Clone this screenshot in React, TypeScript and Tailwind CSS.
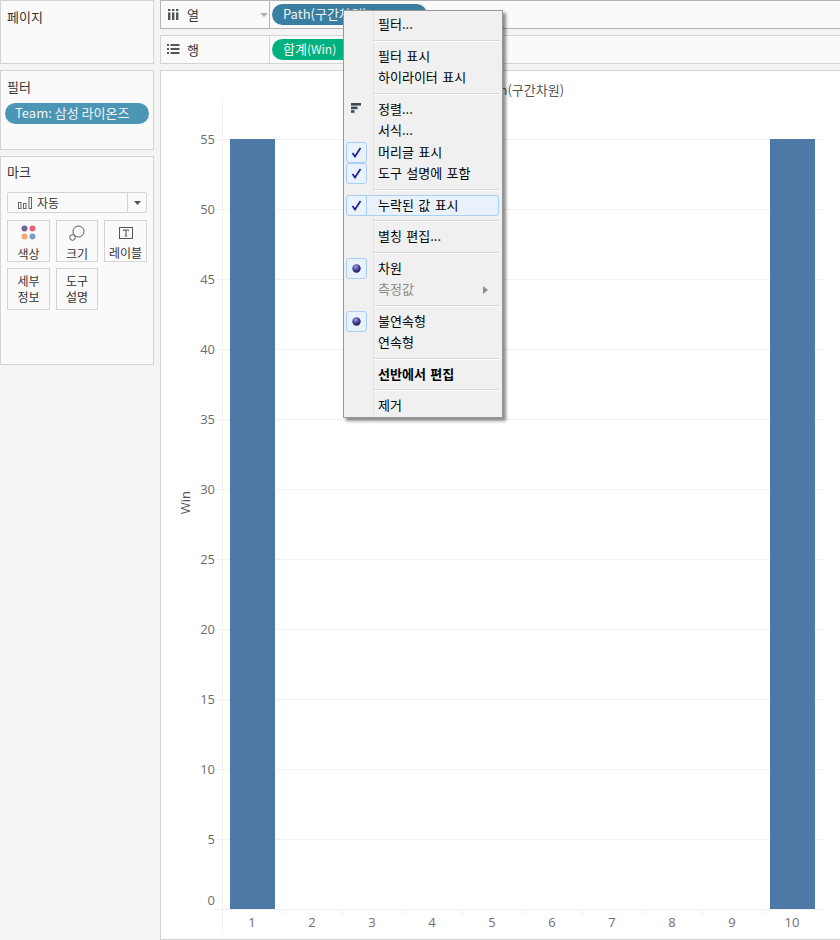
const kr = 'font-["Noto_Sans_CJK_KR","Liberation_Sans",sans-serif]';

const yTicks = [55, 50, 45, 40, 35, 30, 25, 20, 15, 10, 5];
const xTicks = [1, 2, 3, 4, 5, 6, 7, 8, 9, 10];

type Item = {
  label?: string;
  mark?: 'check' | 'radio' | 'sort';
  hl?: boolean;
  bold?: boolean;
  off?: boolean;
  sub?: boolean;
};

const menu: Item[] = [
  { label: '필터...' },
  {},
  { label: '필터 표시' },
  { label: '하이라이터 표시' },
  {},
  { label: '정렬...', mark: 'sort' },
  { label: '서식...' },
  { label: '머리글 표시', mark: 'check' },
  { label: '도구 설명에 포함', mark: 'check' },
  {},
  { label: '누락된 값 표시', mark: 'check', hl: true },
  {},
  { label: '별칭 편집...' },
  {},
  { label: '차원', mark: 'radio' },
  { label: '측정값', off: true, sub: true },
  {},
  { label: '불연속형', mark: 'radio' },
  { label: '연속형' },
  {},
  { label: '선반에서 편집', bold: true },
  {},
  { label: '제거' },
];

function ColumnsIcon() {
  return (
    <svg width="11" height="11" viewBox="0 0 11 11" fill="#555">
      <rect x="0" y="0" width="2.4" height="2" />
      <rect x="4" y="0" width="2.4" height="2" />
      <rect x="8" y="0" width="2.4" height="2" />
      <rect x="0" y="3.4" width="2.4" height="7.6" />
      <rect x="4" y="3.4" width="2.4" height="7.6" />
      <rect x="8" y="3.4" width="2.4" height="7.6" />
    </svg>
  );
}

function RowsIcon() {
  return (
    <svg width="13" height="11" viewBox="0 0 13 11" fill="#555">
      <rect x="0" y="0" width="2" height="2" />
      <rect x="3.5" y="0" width="9" height="2" />
      <rect x="0" y="4" width="2" height="2" />
      <rect x="3.5" y="4" width="9" height="2" />
      <rect x="0" y="8" width="2" height="2" />
      <rect x="3.5" y="8" width="9" height="2" />
    </svg>
  );
}

function MarkButton({ label, icon, narrow }: { label: string[]; icon?: React.ReactNode; narrow?: boolean }) {
  return (
    <div
      className={`${narrow ? 'w-[42px]' : 'w-[43px]'} h-[42px] border border-[#d4d4d4] bg-[#fafafa] flex flex-col items-center text-[12px] leading-[16px] text-[#333] ${
        icon ? 'pt-[4px]' : 'justify-center'
      }`}
    >
      {icon && <div className="h-[16px] mb-[5px] flex items-center justify-center">{icon}</div>}
      {label.map((l) => (
        <div key={l}>{l}</div>
      ))}
    </div>
  );
}

function MenuRow({ item }: { item: Item }) {
  if (!item.label) {
    return (
      <div className="h-[10px] flex flex-col justify-center pl-[30px] pr-[3px]">
        <div className="h-[1px] bg-[#d7d7d7]" />
        <div className="h-[1px] bg-white" />
      </div>
    );
  }
  const boxed = item.mark === 'check' || item.mark === 'radio';
  return (
    <div
      className={`relative flex items-center h-[21.5px] ml-[2px] mr-[3px] border rounded-[3px] ${
        item.hl ? 'border-[#a9d0f5] bg-[#e9f1fb]' : 'border-transparent'
      }`}
    >
      <div
        className={`shrink-0 -ml-[1px] w-[21px] h-[21px] flex items-center justify-center rounded-[3px] border ${
          boxed ? 'border-[#a9cdf3] bg-[#e9f1fb]' : 'border-transparent'
        }`}
      >
        {item.mark === 'check' && (
          <svg width="11" height="11" viewBox="0 0 11 11">
            <path d="M1.5 6 L4 9.5 L9.5 1" fill="none" stroke="#15208f" strokeWidth="1.7" />
          </svg>
        )}
        {item.mark === 'radio' && (
          <svg width="9" height="9" viewBox="0 0 9 9">
            <defs>
              <radialGradient id="ball" cx="40%" cy="30%" r="70%">
                <stop offset="0%" stopColor="#a0a0dc" />
                <stop offset="60%" stopColor="#3d3d8e" />
                <stop offset="100%" stopColor="#22225e" />
              </radialGradient>
            </defs>
            <circle cx="4.5" cy="4.5" r="4.2" fill="url(#ball)" />
          </svg>
        )}
        {item.mark === 'sort' && (
          <svg width="11" height="10" viewBox="0 0 11 10" fill="#3d4654" className="-mt-[2px]">
            <rect x="0" y="0" width="10" height="2.6" />
            <rect x="0" y="3.6" width="6.5" height="2.6" />
            <rect x="0" y="7.2" width="3.5" height="2.6" />
          </svg>
        )}
      </div>
      <span
        className={`ml-[11px] -mt-[1px] text-[13px] leading-[18px] whitespace-nowrap [word-spacing:1.5px] ${
          item.off ? 'text-[#8a8a8a]' : 'text-black'
        } ${item.bold ? 'font-bold' : ''}`}
      >
        {item.label}
      </span>
      {item.sub && (
        <svg width="5" height="8" viewBox="0 0 5 8" className="absolute right-[10px] top-[6px]">
          <path d="M0 0 L5 4 L0 8 Z" fill="#8f8f8f" />
        </svg>
      )}
    </div>
  );
}

export default function App() {
  return (
    <div className={`${kr} relative w-[840px] h-[940px] overflow-hidden bg-[#f4f4f4] flex gap-[6px] text-[13px] text-[#333]`}>
      <div className="w-[154px] shrink-0 flex flex-col gap-[6px]">
        <div className="h-[64px] border border-[#d4d4d4] bg-[#fafafa] px-[6px] pt-[7px] leading-[18px]">페이지</div>
        <div className="h-[80px] border border-[#d4d4d4] bg-[#fafafa] pt-[7px] leading-[18px]">
          <div className="px-[6px]">필터</div>
          <div className="mt-[7px] ml-[4px] w-[144px] h-[21px] rounded-full bg-[#4a96b4] text-[#f4f4f4] pl-[10px] leading-[20px] whitespace-nowrap">
            Team: 삼성 라이온즈
          </div>
        </div>
        <div className="h-[209px] border border-[#d4d4d4] bg-[#fafafa] pt-[6px]">
          <div className="px-[6px] leading-[18px]">마크</div>
          <div className="mt-[11px] ml-[6px] w-[140px] h-[21px] border border-[#d4d4d4] rounded-[2px] flex items-center">
            <svg width="15" height="12" viewBox="0 0 15 12" fill="none" stroke="#666" className="ml-[10px]">
              <rect x="0.5" y="5.5" width="2.5" height="6" />
              <rect x="5.5" y="6.5" width="2.5" height="5" />
              <rect x="11" y="0.5" width="2.5" height="11" />
            </svg>
            <span className="ml-[4px] text-[12px] flex-1">자동</span>
            <div className="w-[19px] h-full border-l border-[#d4d4d4] flex items-center justify-center">
              <svg width="7" height="4" viewBox="0 0 7 4">
                <path d="M0 0 H7 L3.5 4 Z" fill="#555" />
              </svg>
            </div>
          </div>
          <div className="mt-[7px] ml-[6px] flex flex-wrap gap-x-[6px] gap-y-[6px] w-[142px]">
            <MarkButton
              label={['색상']}
              icon={
                <svg width="16" height="16" viewBox="0 0 16 16">
                  <circle cx="3.5" cy="3.5" r="3" fill="#77668f" />
                  <circle cx="11.5" cy="3.5" r="3" fill="#e8627c" />
                  <circle cx="3.5" cy="11.5" r="3" fill="#f2a77b" />
                  <circle cx="11.5" cy="11.5" r="3" fill="#7d9dc8" />
                </svg>
              }
            />
            <MarkButton
              narrow
              label={['크기']}
              icon={
                <svg width="16" height="16" viewBox="0 0 16 16" fill="none" stroke="#555">
                  <circle cx="9.5" cy="6.5" r="5.5" />
                  <circle cx="3.5" cy="12.5" r="2.8" fill="#fafafa" />
                </svg>
              }
            />
            <MarkButton
              label={['레이블']}
              icon={
                <svg width="14" height="12" viewBox="0 0 14 12" fill="none" stroke="#555">
                  <rect x="0.5" y="0.5" width="13" height="11" />
                  <path d="M4.5 4 V3 H9.5 V4 M7 3 V9 M5.8 9 H8.2" />
                </svg>
              }
            />
            <MarkButton label={['세부', '정보']} />
            <MarkButton narrow label={['도구', '설명']} />
          </div>
        </div>
      </div>

      <div className="flex-1 flex flex-col gap-[6px]">
        <div className="h-[29px] border border-[#b4b4b4] border-r-0 bg-[#fafafa] flex">
          <div className="w-[109px] shrink-0 border-r border-[#b4b4b4] flex items-center pl-[7px]">
            <ColumnsIcon />
            <span className="ml-[8px]">열</span>
            <svg width="8" height="4" viewBox="0 0 8 4" className="ml-[61px]">
              <path d="M0 0 H8 L4 4 Z" fill="#b0b0b0" />
            </svg>
          </div>
          <div className="ml-[2px] mt-[3px] w-[155px] h-[21px] rounded-full bg-[#3a7fa1] text-[#f4f4f4] pl-[11px] leading-[20px] whitespace-nowrap">
            Path(구간차원)
          </div>
        </div>
        <div className="h-[29px] border border-[#d4d4d4] border-r-0 bg-[#fafafa] flex">
          <div className="w-[109px] shrink-0 border-r border-[#d4d4d4] flex items-center pl-[6px]">
            <RowsIcon />
            <span className="ml-[7px]">행</span>
          </div>
          <div className="ml-[2px] mt-[3px] w-[130px] h-[21px] rounded-full bg-[#00b180] text-[#f4f4f4] pl-[11px] leading-[20px] whitespace-nowrap">
            합계<span className="text-[12px]">(Win)</span>
          </div>
        </div>

        <div className="flex-1 border border-[#d4d4d4] border-r-0 bg-white">
          <div className="h-[29px] pt-[11px] ml-[61px] w-[600px] text-center text-[13px] leading-[16px] text-[#555]">
            Path(구간차원)
          </div>
          <div className="flex">
            <div className="w-[32px] h-[806px] pl-[16px] flex items-center">
              <span className="[writing-mode:vertical-rl] rotate-180 text-[13px] leading-[16px] text-[#555] font-['Open_Sans',sans-serif]">
                Win
              </span>
            </div>
            <div className="w-[29px] pt-[5px] pr-[7px] text-right text-[13px] text-[#6e6e6e] font-['Open_Sans',sans-serif]">
              {yTicks.map((t) => (
                <div key={t} className="h-[70px] flex items-center justify-end">
                  {t}
                </div>
              ))}
              <div className="h-[52px] flex items-center justify-end">0</div>
            </div>
            <div className="w-[601px] border-l border-[#f0f0f0] pt-[39px]">
              <div className="relative h-[770px]">
                <div className="absolute inset-0 -left-[6px] flex flex-col">
                  {yTicks.map((t) => (
                    <div key={t} className="h-[70px] border-t border-[#f2f2f2]" />
                  ))}
                </div>
                <div className="relative h-full grid grid-cols-10">
                  {xTicks.map((x) => (
                    <div key={x} className="pl-[7px] pr-[8px] flex">
                      {(x === 1 || x === 10) && <div className="w-[45px] bg-[#4e79a7]" />}
                    </div>
                  ))}
                </div>
              </div>
              <div className="-ml-[6px] h-[1px] bg-[#f0f0f0]" />
              <div className="grid grid-cols-10 w-[600px] -ml-[1px] text-[13px] text-[#6e6e6e] font-['Open_Sans',sans-serif]">
                {xTicks.map((x) => (
                  <div key={x} className="h-[24px] relative text-center pt-[3px] leading-[18px]">
                    <div className="absolute left-0 top-0 h-[5px] w-[1px] bg-[#f0f0f0]" />
                    {x}
                  </div>
                ))}
              </div>
            </div>
          </div>
        </div>
      </div>

      <div className="absolute left-[343px] top-[10px] w-[160px] h-[408px] border border-[#979797] bg-[#f0f0f0] pt-[3px] shadow-[3px_3px_3px_rgba(0,0,0,0.45)]">
        <div className="absolute left-[29px] top-0 bottom-0 w-[1px] bg-[#e2e2e2]" />
        {menu.map((item, i) => (
          <MenuRow key={i} item={item} />
        ))}
      </div>
    </div>
  );
}
